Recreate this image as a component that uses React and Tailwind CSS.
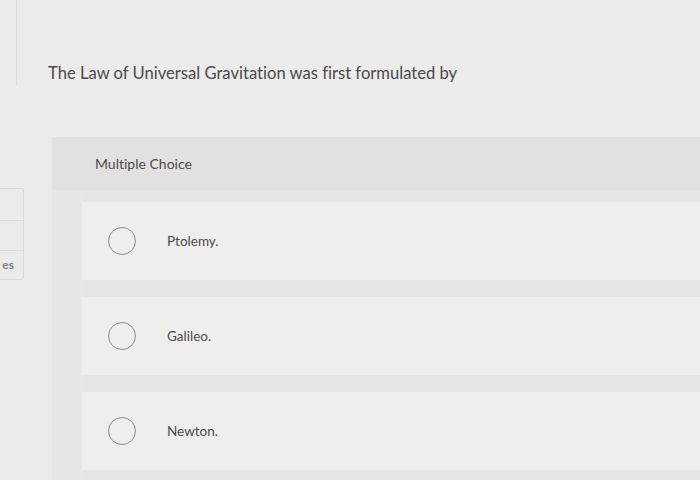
import React from 'react';

const options = ['Ptolemy.', 'Galileo.', 'Newton.'];

const Radio = () => (
  <span className="block w-[28px] h-[28px] rounded-full border-[1.5px] border-[#868a9b] shrink-0" />
);

const App = () => {
  return (
    <div
      className="w-[700px] h-[480px] overflow-hidden flex bg-[#ecebe9] text-[#4a4951] [font-variant-ligatures:none]"
      style={{ fontFamily: 'Lato, "Open Sans", sans-serif' }}
    >
      {/* sidebar remnant */}
      <div className="w-[24px] shrink-0 flex flex-col">
        <div className="h-[86px] w-[17px] border-r border-[#dedcda]" />
        <div className="mt-[102px] h-[92px] border border-l-0 border-[#dcdad8] rounded-r-[3px] flex flex-col">
          <div className="h-[32px] border-b border-[#dedcda]" />
          <div className="h-[30px] border-b border-[#dedcda]" />
          <div className="flex-1 flex items-center justify-end pr-[9px] text-[12px] font-bold text-[#7a8196]">es</div>
        </div>
      </div>

      {/* main */}
      <div className="flex-1 flex flex-col">
        <div className="h-[137px] pl-[24px] pt-[61px]">
          <p className="text-[16.6px] leading-[24px]">
            The Law of Universal Gravitation was first formulated by
          </p>
        </div>

        <div className="ml-[28px] flex-1 flex flex-col">
          <div className="h-[53px] bg-[#e2e1df] flex items-center pl-[43px] text-[14px]">
            Multiple Choice
          </div>
          <div className="flex-1 flex bg-[#e8e7e5]">
            <div className="w-[30px] shrink-0" />
            <div className="flex-1 flex flex-col gap-[17px] pt-[12px] bg-[#e6e5e3]">
              {options.map((o) => (
                <div key={o} className="h-[78px] flex items-center pl-[26px] bg-[#efeeec]">
                  <Radio />
                  <span className="ml-[31px] text-[13.5px]">{o}</span>
                </div>
              ))}
            </div>
          </div>
        </div>
      </div>
    </div>
  );
};

export default App;
